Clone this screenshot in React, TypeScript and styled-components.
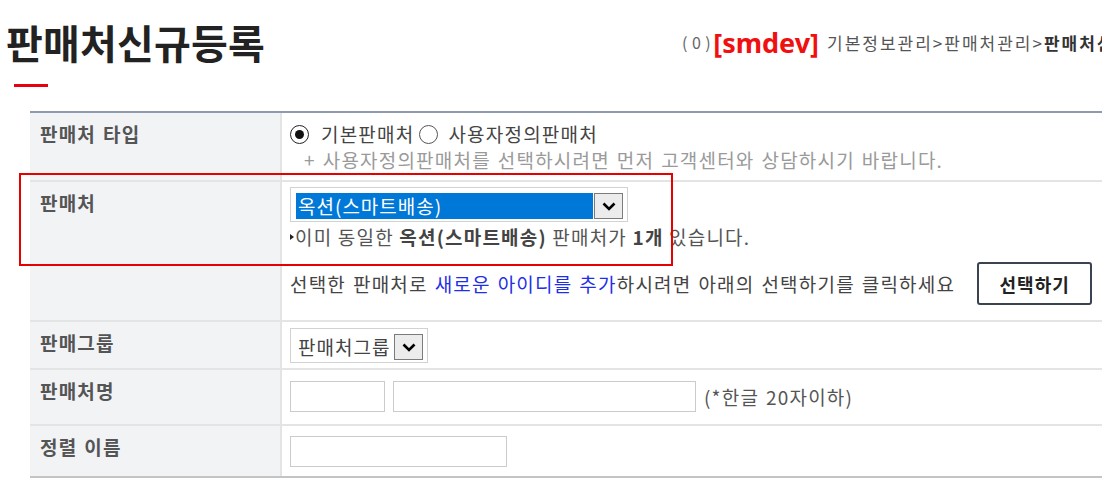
import React from "react";
import styled, { createGlobalStyle } from "styled-components";

const Global = createGlobalStyle`
  html, body { margin: 0; padding: 0; background: #fff; overflow: hidden; }
  body { font-family: "Noto Sans CJK KR", "Noto Sans", sans-serif; color: #444; }
  * { box-sizing: border-box; }
`;

const Page = styled.div`
  position: relative;
  width: 1102px;
  height: 500px;
  overflow: hidden;
`;

const Header = styled.header`
  display: grid;
  grid-template-columns: 676px auto;
  align-items: center;
  padding: 14px 0 0 6px;
  white-space: nowrap;
`;

const Title = styled.h1`
  margin: 0;
  font-size: 40px;
  line-height: 56px;
  font-weight: 700;
  color: #222;
  letter-spacing: 0.2px;
`;

const Breadcrumb = styled.nav`
  display: flex;
  align-items: center;
  overflow: hidden;
  font-size: 17px;
  letter-spacing: 2px;
  color: #555;
`;

const Count = styled.span`
  font-size: 16px;
  letter-spacing: 4.5px;
  color: #666;
`;

const Site = styled.span`
  font-family: "Noto Sans", sans-serif;
  font-weight: 700;
  font-size: 27px;
  letter-spacing: 0;
  color: #f01010;
  margin: 0 8px 0 -2px;
`;

const Current = styled.b`
  color: #333;
`;

const RedBar = styled.div`
  width: 34px;
  height: 3px;
  margin: 14px 0 0 14px;
  background: #e60012;
`;

const FormTable = styled.div`
  width: 1072px;
  margin: 24px 0 0 30px;
  border-top: 2px solid #8d9ab0;
  border-bottom: 2px solid #c4c4c4;
  font-size: 19px;
  line-height: 26px;
  letter-spacing: 1.2px;
  word-spacing: 1.5px;
  white-space: nowrap;
`;

const Row = styled.div<{ $h: number }>`
  display: grid;
  grid-template-columns: 252px 1fr;
  min-height: ${(p) => p.$h}px;
  & + & {
    border-top: 2px solid #e4e4e4;
  }
`;

const Th = styled.div`
  background: #f1f3f5;
  border-right: 2px solid #e4e4e4;
  padding: 8px 10px;
  font-weight: 700;
  color: #555;
`;

const Td = styled.div<{ $pt: number }>`
  padding: ${(p) => p.$pt}px 8px 0 8px;
  color: #444;
`;

const RadioLine = styled.div`
  display: flex;
  align-items: center;
  color: #444;
`;

const Radio = styled.span<{ $checked?: boolean }>`
  flex: none;
  width: 19px;
  height: 19px;
  border-radius: 50%;
  border: 1.5px solid ${(p) => (p.$checked ? "#222" : "#555")};
  display: inline-flex;
  align-items: center;
  justify-content: center;
  margin: 0 ${(p) => (p.$checked ? 12 : 10)}px 0 ${(p) => (p.$checked ? 0 : 5)}px;
  &::after {
    content: "";
    width: 9px;
    height: 9px;
    border-radius: 50%;
    background: ${(p) => (p.$checked ? "#111" : "transparent")};
  }
`;

const Help = styled.div`
  padding-left: 14px;
  color: #9a9a9a;
`;

const SelectBox = styled.div<{ $w: number }>`
  display: flex;
  width: ${(p) => p.$w}px;
  height: 35px;
  border: 1px solid #d2d2d2;
  padding: 5px 4px 2px 5px;
  gap: 1px;
  background: #fff;
`;

const SelectValue = styled.span<{ $active?: boolean }>`
  flex: 1;
  background: ${(p) => (p.$active ? "#0078d7" : "transparent")};
  color: ${(p) => (p.$active ? "#fff" : "#444")};
  line-height: 26px;
  padding-left: 2px;
  letter-spacing: 1px;
`;

const DropBtn = styled.span`
  width: 29px;
  border: 1px solid #7b7b7b;
  background: #ececec;
  display: flex;
  align-items: center;
  justify-content: center;
`;

const Warning = styled.div`
  display: flex;
  align-items: center;
  margin-top: 2px;
  color: #555;
  white-space: pre;
  word-spacing: 0;
  &::before {
    content: "";
    border-left: 4px solid #222;
    border-top: 3px solid transparent;
    border-bottom: 3px solid transparent;
    margin-right: 1px;
  }
  b {
    color: #444;
  }
`;

const ActionLine = styled.div`
  display: flex;
  align-items: center;
  gap: 22px;
  margin-top: 12px;
  color: #444;
`;

const Link = styled.span`
  color: #1f2fe8;
`;

const Button = styled.button`
  flex: none;
  width: 115px;
  height: 43px;
  border: 2px solid #3b4350;
  border-radius: 3px;
  background: #fff;
  font-family: inherit;
  font-size: 18px;
  letter-spacing: 1px;
  font-weight: 700;
  color: #222;
  padding: 0;
`;

const InputLine = styled.div`
  display: flex;
  align-items: center;
  gap: 8px;
  color: #555;
`;

const Input = styled.span<{ $w: number }>`
  display: block;
  width: ${(p) => p.$w}px;
  height: 31px;
  border: 1px solid #cbcbcb;
  background: #fff;
`;

const Highlight = styled.div`
  position: absolute;
  left: 19px;
  top: 173px;
  width: 654px;
  height: 93px;
  border: 2px solid #e60000;
  pointer-events: none;
`;

const Chevron = () => (
  <svg width="16" height="12" viewBox="0 0 16 12">
    <path d="M2.5 3.5 L8 9 L13.5 3.5" fill="none" stroke="#000" strokeWidth="2.6" />
  </svg>
);

export default function App() {
  return (
    <Page>
      <Global />
      <Header>
        <Title>판매처신규등록</Title>
        <Breadcrumb>
          <Count>(0)</Count>
          <Site>[smdev]</Site>
          <span>기본정보관리&gt;판매처관리&gt;</span>
          <Current>판매처신규등록</Current>
        </Breadcrumb>
      </Header>
      <RedBar />
      <FormTable>
        <Row $h={67}>
          <Th>판매처 타입</Th>
          <Td $pt={8}>
            <RadioLine>
              <Radio $checked />
              기본판매처
              <Radio />
              사용자정의판매처
            </RadioLine>
            <Help>+ 사용자정의판매처를 선택하시려면 먼저 고객센터와 상담하시기 바랍니다.</Help>
          </Td>
        </Row>
        <Row $h={140}>
          <Th>판매처</Th>
          <Td $pt={5}>
            <SelectBox $w={338}>
              <SelectValue $active>옥션(스마트배송)</SelectValue>
              <DropBtn>
                <Chevron />
              </DropBtn>
            </SelectBox>
            <Warning>
              이미 동일한 <b>옥션(스마트배송)</b> 판매처가 <b>1개</b> 있습니다.
            </Warning>
            <ActionLine>
              <span>
                선택한 판매처로 <Link>새로운 아이디를 추가</Link>하시려면 아래의 선택하기를 클릭하세요
              </span>
              <Button>선택하기</Button>
            </ActionLine>
          </Td>
        </Row>
        <Row $h={48}>
          <Th>판매그룹</Th>
          <Td $pt={6}>
            <SelectBox $w={138}>
              <SelectValue>판매처그룹</SelectValue>
              <DropBtn>
                <Chevron />
              </DropBtn>
            </SelectBox>
          </Td>
        </Row>
        <Row $h={56}>
          <Th>판매처명</Th>
          <Td $pt={11}>
            <InputLine>
              <Input $w={95} />
              <Input $w={303} />
              <span>(*한글 20자이하)</span>
            </InputLine>
          </Td>
        </Row>
        <Row $h={52}>
          <Th>정렬 이름</Th>
          <Td $pt={10}>
            <Input $w={217} />
          </Td>
        </Row>
      </FormTable>
      <Highlight />
    </Page>
  );
}
